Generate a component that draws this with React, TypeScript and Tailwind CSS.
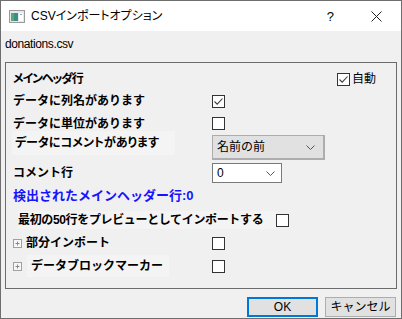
import React from "react";

const FONT = { fontFamily: '"Liberation Sans", "Noto Sans CJK JP", sans-serif' };

function Check({ checked }: { checked?: boolean }) {
  return (
    <div className="w-[13px] h-[13px] border border-[#333333] bg-white flex items-center justify-center">
      {checked && (
        <svg width="11" height="11" viewBox="0 0 11 11">
          <path d="M1.5 5.5 L4.2 8.2 L9.5 2.5" fill="none" stroke="#3c3c3c" strokeWidth="1.1" />
        </svg>
      )}
    </div>
  );
}

function PlusBox() {
  return (
    <svg width="9" height="9" viewBox="0 0 9 9" className="shrink-0">
      <rect x="0.5" y="0.5" width="8" height="8" fill="#f7f7f7" stroke="#a0a0a0" />
      <path d="M2.5 4.5 H6.5 M4.5 2.5 V6.5" stroke="#8a8a8a" />
    </svg>
  );
}

function Chevron() {
  return (
    <svg width="9" height="5" viewBox="0 0 9 5">
      <path d="M0.5 0.5 L4.5 4.5 L8.5 0.5" fill="none" stroke="#555" />
    </svg>
  );
}

export default function App() {
  return (
    <div
      className="w-[402px] h-[319px] border border-[#6e6e6e] bg-[#f0f0f0] flex flex-col text-[12px] text-black overflow-hidden"
      style={FONT}
    >
      {/* title bar */}
      <div className="h-[30px] bg-white flex items-center shrink-0">
        <svg width="16" height="13" viewBox="0 0 16 13" className="ml-[8px]">
          <rect x="0.5" y="0.5" width="15" height="12" fill="#e8e8e8" stroke="#9a9a9a" />
          <rect x="2" y="3" width="7" height="8" fill="#3a8f8a" />
          <rect x="2" y="3" width="3" height="8" fill="#5aa86a" />
          <rect x="10" y="3" width="4" height="8" fill="#ffffff" />
          <rect x="11" y="4" width="2" height="1" fill="#8aa0c0" />
        </svg>
        <span className="ml-[6px] leading-none [font-feature-settings:'palt']">CSVインポートオプション</span>
        <span className="ml-auto mr-[37px] text-[13px] leading-none">?</span>
        <svg width="11" height="11" viewBox="0 0 11 11" className="mr-[19px]">
          <path d="M0.5 0.5 L10.5 10.5 M10.5 0.5 L0.5 10.5" stroke="#222" strokeWidth="1" />
        </svg>
      </div>

      {/* file name */}
      <div className="h-[31px] pl-[4px] pt-[5px] leading-[16px] tracking-[-0.4px]">donations.csv</div>

      {/* options panel */}
      <div className="mx-[4px] border border-[#6b6b6b] h-[227px] flex flex-col pt-[5px]">
        <div className="h-[22px] flex items-center pl-[7px]">
          <span className="w-[324px] font-bold [font-feature-settings:'palt'] tracking-[-1.2px]">メインヘッダ行</span>
          <Check checked />
          <span className="ml-[2px]">自動</span>
        </div>
        <div className="h-[22px] flex items-center pl-[7px]">
          <span className="w-[199px] font-bold">データに列名があります</span>
          <Check checked />
        </div>
        <div className="h-[23px] flex items-center pl-[7px]">
          <span className="w-[199px] font-bold">データに単位があります</span>
          <Check />
        </div>
        <div className="h-[26px] flex items-start pl-[6px]">
          <div className="w-[163px] h-[24px] bg-[#f4f4f4] flex items-center pl-[3px] font-bold -mt-[4px] [font-feature-settings:'palt']">
            データにコメントがあります
          </div>
          <div className="ml-[37px] w-[113px] h-[25px] bg-[#e1e1e1] border border-[#adadad] border-r-2 border-b-2 flex items-center pl-[4px] pr-[8px]">
            <span className="flex-1">名前の前</span>
            <Chevron />
          </div>
        </div>
        <div className="h-[22px] flex items-center pl-[7px] mt-[1px]">
          <span className="w-[199px] font-bold">コメント行</span>
          <div className="w-[70px] h-[20px] bg-white border border-[#7a7a7a] flex items-center pl-[4px] pr-[6px]">
            <span className="flex-1">0</span>
            <Chevron />
          </div>
        </div>
        <div className="h-[24px] flex items-center pl-[7px] font-bold text-[#1414ff] text-[13px]">
          検出されたメインヘッダー行:0
        </div>
        <div className="h-[24px] flex items-center pl-[12px]">
          <span className="font-bold bg-[#f4f4f4] pr-[13px] tracking-[-0.35px]">最初の50行をプレビューとしてインポートする</span>
          <Check />
        </div>
        <div className="h-[22px] flex items-center pl-[7px]">
          <div className="w-[199px] flex items-center">
            <PlusBox />
            <span className="ml-[4px] font-bold">部分インポート</span>
          </div>
          <Check />
        </div>
        <div className="h-[24px] flex items-center pl-[7px]">
          <div className="w-[199px] flex items-center">
            <PlusBox />
            <span className="ml-[5px] pl-[4px] pr-[6px] font-bold bg-[#f4f4f4] leading-[22px]">データブロックマーカー</span>
          </div>
          <Check />
        </div>
      </div>

      {/* buttons */}
      <div className="flex justify-end gap-[7px] mt-[8px] mr-[5px]">
        <button className="w-[71px] h-[20px] bg-[#e1e1e1] border-2 border-[#0078d7] leading-none">OK</button>
        <button className="w-[71px] h-[20px] bg-[#e1e1e1] border border-[#adadad] leading-none">キャンセル</button>
      </div>
    </div>
  );
}
